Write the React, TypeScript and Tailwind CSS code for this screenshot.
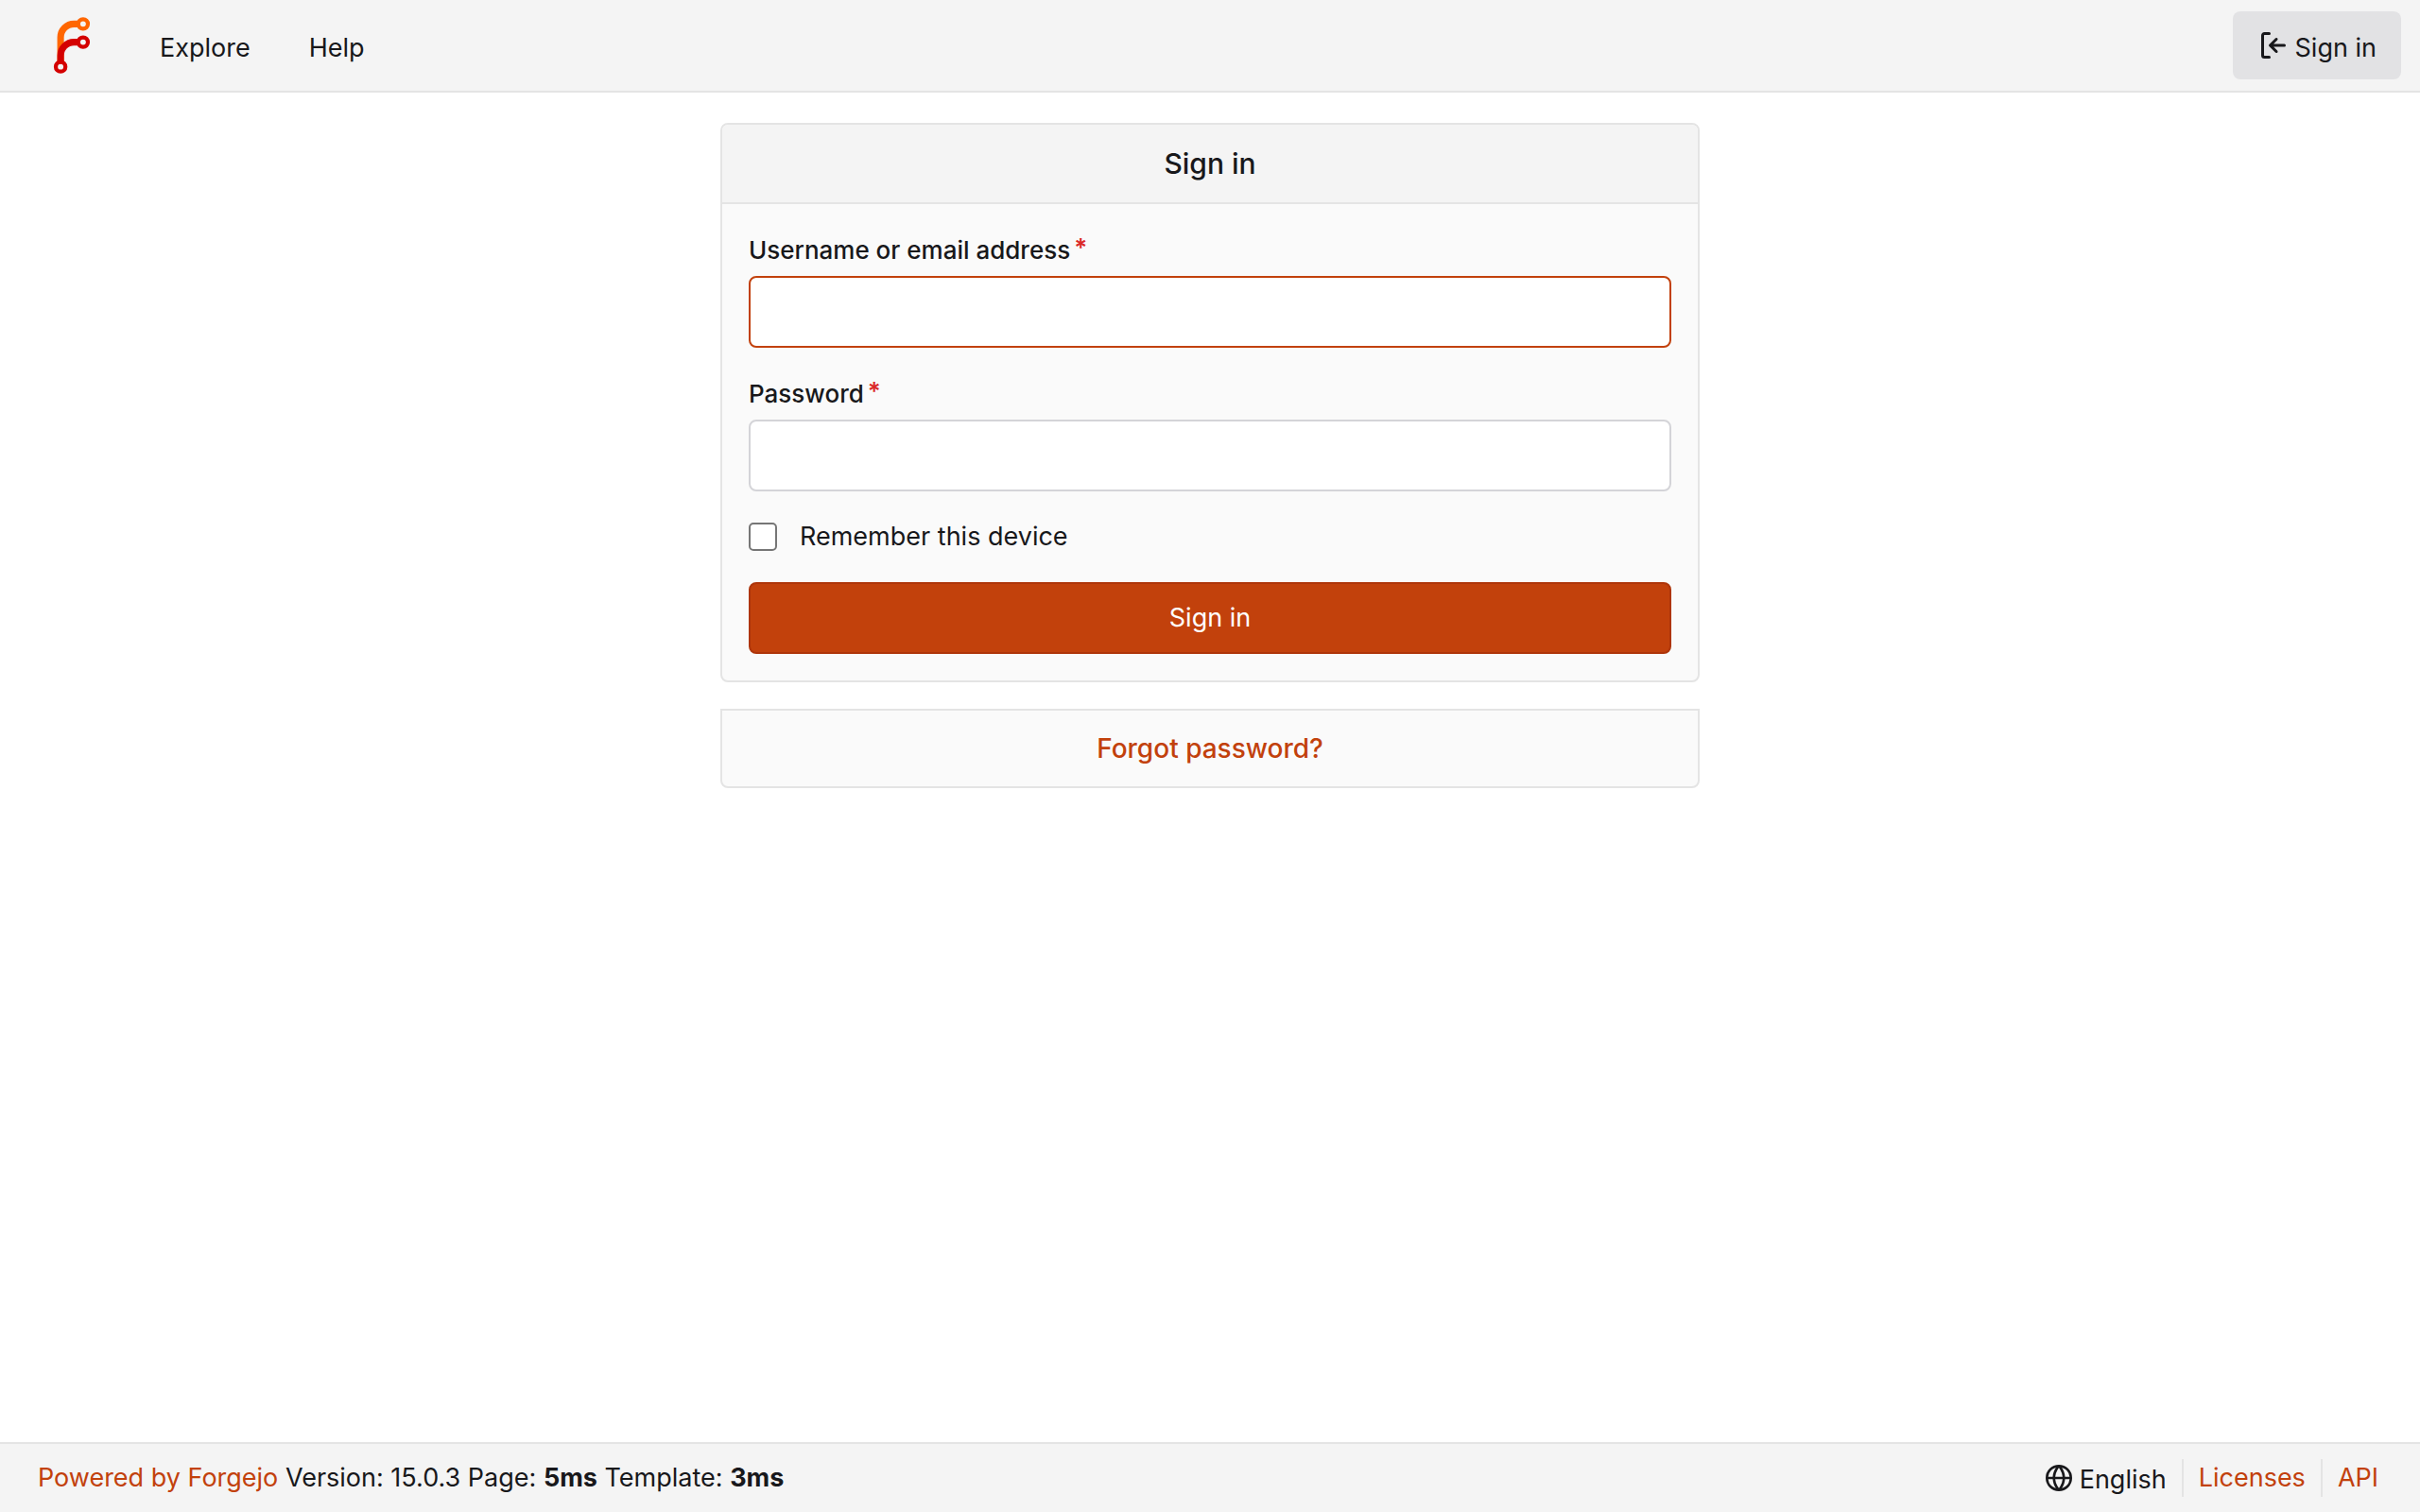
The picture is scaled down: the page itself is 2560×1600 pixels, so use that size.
import type { ReactNode } from 'react';

const navLinks = ['Explore', 'Help'];

const footerLinks = ['Licenses', 'API'];

function Logo() {
  return (
    <svg viewBox="0 0 212 212" className="size-[60px]" fill="none" aria-hidden="true">
      <g transform="translate(6 6)">
        <path d="M58 168V70a50 50 0 0 1 50-50h20" stroke="#ff6600" strokeWidth="25" />
        <path d="M58 168v-30a50 50 0 0 1 50-50h20" stroke="#d40000" strokeWidth="25" />
        <circle cx="142" cy="20" r="18" stroke="#ff6600" strokeWidth="15" />
        <circle cx="142" cy="88" r="18" stroke="#d40000" strokeWidth="15" />
        <circle cx="58" cy="180" r="18" stroke="#d40000" strokeWidth="15" />
      </g>
    </svg>
  );
}

function SignInIcon() {
  return (
    <svg viewBox="0 0 16 16" className="size-8" fill="currentColor" aria-hidden="true">
      <path d="M2 2.75C2 1.784 2.784 1 3.75 1h2.5a.75.75 0 0 1 0 1.5h-2.5a.25.25 0 0 0-.25.25v10.5c0 .138.112.25.25.25h2.5a.75.75 0 0 1 0 1.5h-2.5A1.75 1.75 0 0 1 2 13.25Zm6.56 4.5h5.69a.75.75 0 0 1 0 1.5H8.56l1.97 1.97a.749.749 0 0 1-.326 1.275.749.749 0 0 1-.734-.215L6.22 8.53a.75.75 0 0 1 0-1.06l3.25-3.25a.749.749 0 0 1 1.275.326.749.749 0 0 1-.215.734L8.56 7.25Z" />
    </svg>
  );
}

function GlobeIcon() {
  return (
    <svg viewBox="0 0 16 16" className="size-7" fill="currentColor" aria-hidden="true">
      <path d="M8 0a8 8 0 1 1 0 16A8 8 0 0 1 8 0ZM5.78 8.75a9.64 9.64 0 0 0 1.363 4.177c.255.426.542.832.857 1.215.245-.296.551-.705.857-1.215A9.64 9.64 0 0 0 10.22 8.75Zm4.44-1.5a9.64 9.64 0 0 0-1.363-4.177c-.307-.51-.612-.919-.857-1.215a9.927 9.927 0 0 0-.857 1.215A9.64 9.64 0 0 0 5.78 7.25Zm-5.944 1.5H1.543a6.507 6.507 0 0 0 4.666 5.5c-.123-.181-.24-.365-.352-.552-.715-1.192-1.437-2.874-1.581-4.948Zm-2.733-1.5h2.733c.144-2.074.866-3.756 1.58-4.948.12-.197.237-.381.353-.552a6.507 6.507 0 0 0-4.666 5.5Zm10.181 1.5c-.144 2.074-.866 3.756-1.58 4.948-.12.197-.237.381-.353.552a6.507 6.507 0 0 0 4.666-5.5Zm2.733-1.5a6.507 6.507 0 0 0-4.666-5.5c.123.181.24.365.353.552.714 1.192 1.436 2.874 1.58 4.948Z" />
    </svg>
  );
}

interface FieldProps {
  id: string;
  type: string;
  active?: boolean;
  children: ReactNode;
}

function Field({ id, type, active, children }: FieldProps) {
  return (
    <div>
      <label htmlFor={id} className="mb-2.5 flex gap-1 text-[26px] leading-[34px] font-medium">
        {children}
        <span className="leading-7 font-semibold text-[#db2828]">*</span>
      </label>
      <input
        id={id}
        type={type}
        required
        className={`block h-[76px] w-full rounded-lg border-2 bg-white px-6 outline-none focus:border-[#c2410c] ${
          active ? 'border-[#c2410c]' : 'border-[#d4d4d8]'
        }`}
      />
    </div>
  );
}

export default function App() {
  return (
    <div className="flex min-h-screen flex-col bg-white font-['Inter','Noto_Sans',sans-serif] text-[27px] leading-10 text-[#18181b]">
      <nav className="flex items-center justify-between border-b-2 border-[#e4e4e4] bg-[#f4f4f4] py-3 pr-5 pl-[46px]">
        <div className="flex items-center">
          <a href="#home" aria-label="Home" className="mr-8">
            <Logo />
          </a>
          {navLinks.map((label) => (
            <a key={label} href={`#${label.toLowerCase()}`} className="px-[31px] pt-1.5">
              {label}
            </a>
          ))}
        </div>
        <a
          href="#login"
          className="flex h-[72px] items-center gap-2 rounded-lg bg-[#e2e2e4] px-[26px]"
        >
          <SignInIcon />
          <span className="pt-1.5">Sign in</span>
        </a>
      </nav>

      <main className="mx-auto w-full max-w-[1036px] grow py-8">
        <section className="rounded-lg border-2 border-[#e4e4e4] bg-[#fafafa]">
          <h1 className="rounded-t-md border-b-2 border-[#e4e4e4] bg-[#f4f4f4] py-[21px] text-center text-[30px] font-medium">
            Sign in
          </h1>
          <form className="flex flex-col gap-8 p-7 pt-8" onSubmit={(e) => e.preventDefault()}>
            <Field id="user_name" type="text" active>
              Username or email address
            </Field>
            <Field id="password" type="password">
              Password
            </Field>
            <div className="-my-1 flex items-center gap-6">
              <input
                id="remember"
                type="checkbox"
                className="size-[30px] appearance-none rounded-[5px] border-2 border-[#767676] bg-white checked:bg-[#c2410c]"
              />
              <label htmlFor="remember">Remember this device</label>
            </div>
            <button
              type="submit"
              className="h-[76px] rounded-lg border-2 border-[#ae350a] bg-[#c2410c] text-white"
            >
              Sign in
            </button>
          </form>
        </section>

        <section className="mt-7 rounded-b-lg border-2 border-[#e4e4e4] bg-[#fafafa] py-5 text-center text-[28px]">
          <a href="#forgot_password" className="font-medium text-[#c2410c]">
            Forgot password?
          </a>
        </section>
      </main>

      <footer className="flex items-center justify-between border-t-2 border-[#e4e4e4] bg-[#f4f4f4] px-10 py-4">
        <p>
          <a href="#forgejo" className="text-[#c2410c]">
            Powered by Forgejo
          </a>{' '}
          Version: 15.0.3 Page: <strong className="font-bold">5ms</strong> Template:{' '}
          <strong className="font-bold">3ms</strong>
        </p>
        <div className="flex items-center">
          <button type="button" className="flex h-10 items-center gap-2 pr-4">
            <GlobeIcon />
            <span className="pt-1">English</span>
          </button>
          {footerLinks.map((label) => (
            <a
              key={label}
              href={`#${label.toLowerCase()}`}
              className="border-l-2 border-[#e4e4e4] px-4 text-[#c2410c] last:pr-1"
            >
              {label}
            </a>
          ))}
        </div>
      </footer>
    </div>
  );
}
